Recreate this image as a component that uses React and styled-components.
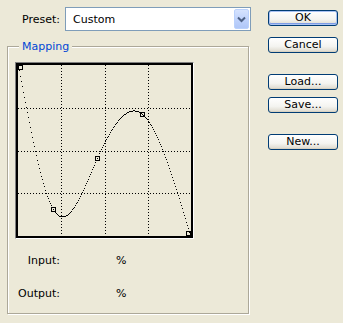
import React from 'react'
import styled, { createGlobalStyle } from 'styled-components'

const GlobalStyle = createGlobalStyle`
    html, body {
        margin: 0;
        padding: 0;
        background: #ECE9D8;
    }
    body {
        font-family: "DejaVu Sans", "Liberation Sans", sans-serif;
        font-size: 11px;
        color: #000;
    }
`;

const GRAPH_W = 173
const GRAPH_H = 171

// control points of the curve, input -> output, 0..1
const points = [
    [0, 1],
    [0.203, 0.153],
    [0.459, 0.453],
    [0.721, 0.712],
    [1, 0],
]

function makeSpline(pts) {
    const n = pts.length
    const xs = pts.map(p => p[0])
    const ys = pts.map(p => p[1])
    const h = []
    for (let i = 0; i < n - 1; i++) h.push(xs[i + 1] - xs[i])
    const a = new Array(n).fill(0)
    const b = new Array(n).fill(1)
    const c = new Array(n).fill(0)
    const d = new Array(n).fill(0)
    for (let i = 1; i < n - 1; i++) {
        a[i] = h[i - 1]
        b[i] = 2 * (h[i - 1] + h[i])
        c[i] = h[i]
        d[i] = 6 * ((ys[i + 1] - ys[i]) / h[i] - (ys[i] - ys[i - 1]) / h[i - 1])
    }
    // thomas algorithm, natural ends
    const m = new Array(n).fill(0)
    const cp = new Array(n).fill(0)
    const dp = new Array(n).fill(0)
    for (let i = 1; i < n; i++) {
        const den = b[i] - a[i] * cp[i - 1]
        cp[i] = c[i] / den
        dp[i] = (d[i] - a[i] * dp[i - 1]) / den
    }
    for (let i = n - 1; i >= 0; i--) {
        m[i] = dp[i] - (i < n - 1 ? cp[i] * m[i + 1] : 0)
    }
    m[0] = 0
    m[n - 1] = 0
    return x => {
        let i = 0
        while (i < n - 2 && x > xs[i + 1]) i++
        const t1 = xs[i + 1] - x
        const t0 = x - xs[i]
        const hi = h[i]
        return (m[i] * t1 * t1 * t1) / (6 * hi) +
            (m[i + 1] * t0 * t0 * t0) / (6 * hi) +
            (ys[i] / hi - (m[i] * hi) / 6) * t1 +
            (ys[i + 1] / hi - (m[i + 1] * hi) / 6) * t0
    }
}

function CurveGraph() {
    const spline = makeSpline(points)
    const dots = []
    for (let x = 0; x < GRAPH_W; x++) {
        let v = spline(x / (GRAPH_W - 1))
        v = Math.max(0, Math.min(1, v))
        const y = Math.round((1 - v) * (GRAPH_H - 1))
        dots.push(<rect key={x} x={x} y={y} width="1" height="1" />)
    }
    const grid = [1, 2, 3]
    return (
        <svg width={GRAPH_W} height={GRAPH_H} shapeRendering="crispEdges" style={{ display: 'block' }}>
            {grid.map(i => {
                const gx = Math.round(i * GRAPH_W / 4) + 0.5
                return <line key={'v' + i} x1={gx} y1={0} x2={gx} y2={GRAPH_H} stroke="#000" strokeDasharray="1 2" />
            })}
            {grid.map(i => {
                const gy = Math.round(i * GRAPH_H / 4) + 0.5
                return <line key={'h' + i} x1={0} y1={gy} x2={GRAPH_W} y2={gy} stroke="#000" strokeDasharray="1 2" />
            })}
            <g fill="#000">{dots}</g>
            {points.map(([px, py], i) => {
                const cx = Math.min(GRAPH_W - 3, Math.max(2, Math.round(px * (GRAPH_W - 1))))
                const cy = Math.min(GRAPH_H - 3, Math.max(2, Math.round((1 - py) * (GRAPH_H - 1))))
                return (
                    <rect key={'p' + i} x={cx - 2 + 0.5} y={cy - 2 + 0.5} width="4" height="4"
                        fill="none" stroke="#000" />
                )
            })}
        </svg>
    )
}

function App() {
    return (
        <Page>
            <GlobalStyle />
            <LeftCol>
                <PresetRow>
                    <Label>Preset:</Label>
                    <Combo>
                        <ComboText>Custom</ComboText>
                        <ComboButton>
                            <svg width="9" height="7" viewBox="0 0 9 7">
                                <path d="M1 1.5 L4.5 5 L8 1.5" fill="none" stroke="#4D6185" strokeWidth="2" />
                            </svg>
                        </ComboButton>
                    </Combo>
                </PresetRow>
                <GroupBox>
                    <Legend>Mapping</Legend>
                    <GraphFrame>
                        <GraphInner>
                            <CurveGraph />
                        </GraphInner>
                    </GraphFrame>
                    <Fields>
                        <Field>
                            <FieldLabel>Input:</FieldLabel>
                            <span>%</span>
                        </Field>
                        <Field>
                            <FieldLabel>Output:</FieldLabel>
                            <span>%</span>
                        </Field>
                    </Fields>
                </GroupBox>
            </LeftCol>
            <ButtonCol>
                <ButtonGroup $gap={11}>
                    <XpButton $default>OK</XpButton>
                    <XpButton>Cancel</XpButton>
                </ButtonGroup>
                <ButtonGroup $gap={7}>
                    <XpButton>Load...</XpButton>
                    <XpButton>Save...</XpButton>
                </ButtonGroup>
                <ButtonGroup $gap={7}>
                    <XpButton>New...</XpButton>
                </ButtonGroup>
            </ButtonCol>
        </Page>
    )
}

const Page = styled.div`
    width: 343px;
    height: 323px;
    display: flex;
    background: #ECE9D8;
    overflow: hidden;
`;

const LeftCol = styled.div`
    width: 261px;
    padding-left: 7px;
    box-sizing: border-box;
`;

const PresetRow = styled.div`
    display: flex;
    align-items: center;
    gap: 5px;
    margin-top: 7px;
    padding-left: 15px;
`;

const Label = styled.span`
    white-space: nowrap;
`;

const Combo = styled.div`
    width: 186px;
    height: 24px;
    box-sizing: border-box;
    border: 1px solid #7F9DB9;
    background: #fff;
    display: flex;
    align-items: center;
    justify-content: space-between;
    padding: 1px;
`;

const ComboText = styled.span`
    padding-left: 6px;
`;

const ComboButton = styled.div`
    width: 15px;
    height: 20px;
    box-sizing: border-box;
    border: 1px solid #BAD1FC;
    border-radius: 2px;
    background: linear-gradient(#D6E3FE, #C0D3FC 50%, #B0C7F8);
    display: flex;
    align-items: center;
    justify-content: center;
`;

const GroupBox = styled.div`
    position: relative;
    margin-top: 15px;
    width: 242px;
    height: 268px;
    box-sizing: border-box;
    border: 1px solid #ACA899;
    box-shadow: inset 1px 1px 0 #fff, 1px 1px 0 #fff;
    padding: 15px 0 0 7px;
`;

const Legend = styled.span`
    position: absolute;
    top: -7px;
    left: 11px;
    padding: 0 3px;
    background: #ECE9D8;
    color: #0046D5;
    line-height: 13px;
`;

const GraphFrame = styled.div`
    width: fit-content;
    border: 1px solid;
    border-color: #808080 #fff #fff #808080;
`;

const GraphInner = styled.div`
    border: 2px solid #000;
`;

const Fields = styled.div`
    display: flex;
    flex-direction: column;
    gap: 20px;
    margin-top: 15px;
`;

const Field = styled.div`
    display: grid;
    grid-template-columns: 45px auto;
    column-gap: 56px;
    line-height: 13px;
`;

const FieldLabel = styled.span`
    text-align: right;
`;

const ButtonCol = styled.div`
    display: flex;
    flex-direction: column;
    gap: 21px;
    padding-top: 10px;
    padding-left: 7px;
`;

const ButtonGroup = styled.div`
    display: flex;
    flex-direction: column;
    gap: ${props => props.$gap}px;
`;

const XpButton = styled.button`
    width: 70px;
    height: 16px;
    box-sizing: border-box;
    padding: 0;
    margin: 0;
    font-family: inherit;
    font-size: 11px;
    line-height: 12px;
    color: #000;
    border: 1px solid #003C74;
    border-radius: 3px;
    background: linear-gradient(#FFFFFF, #F4F4F0 60%, #DCD8CC);
    box-shadow: ${props => props.$default
        ? 'inset 0 0 0 1px #A9C2F3, inset 0 -1px 0 1px #7D9CE6'
        : 'inset 0 -1px 0 #D8D2C2'};
`;

export default App
